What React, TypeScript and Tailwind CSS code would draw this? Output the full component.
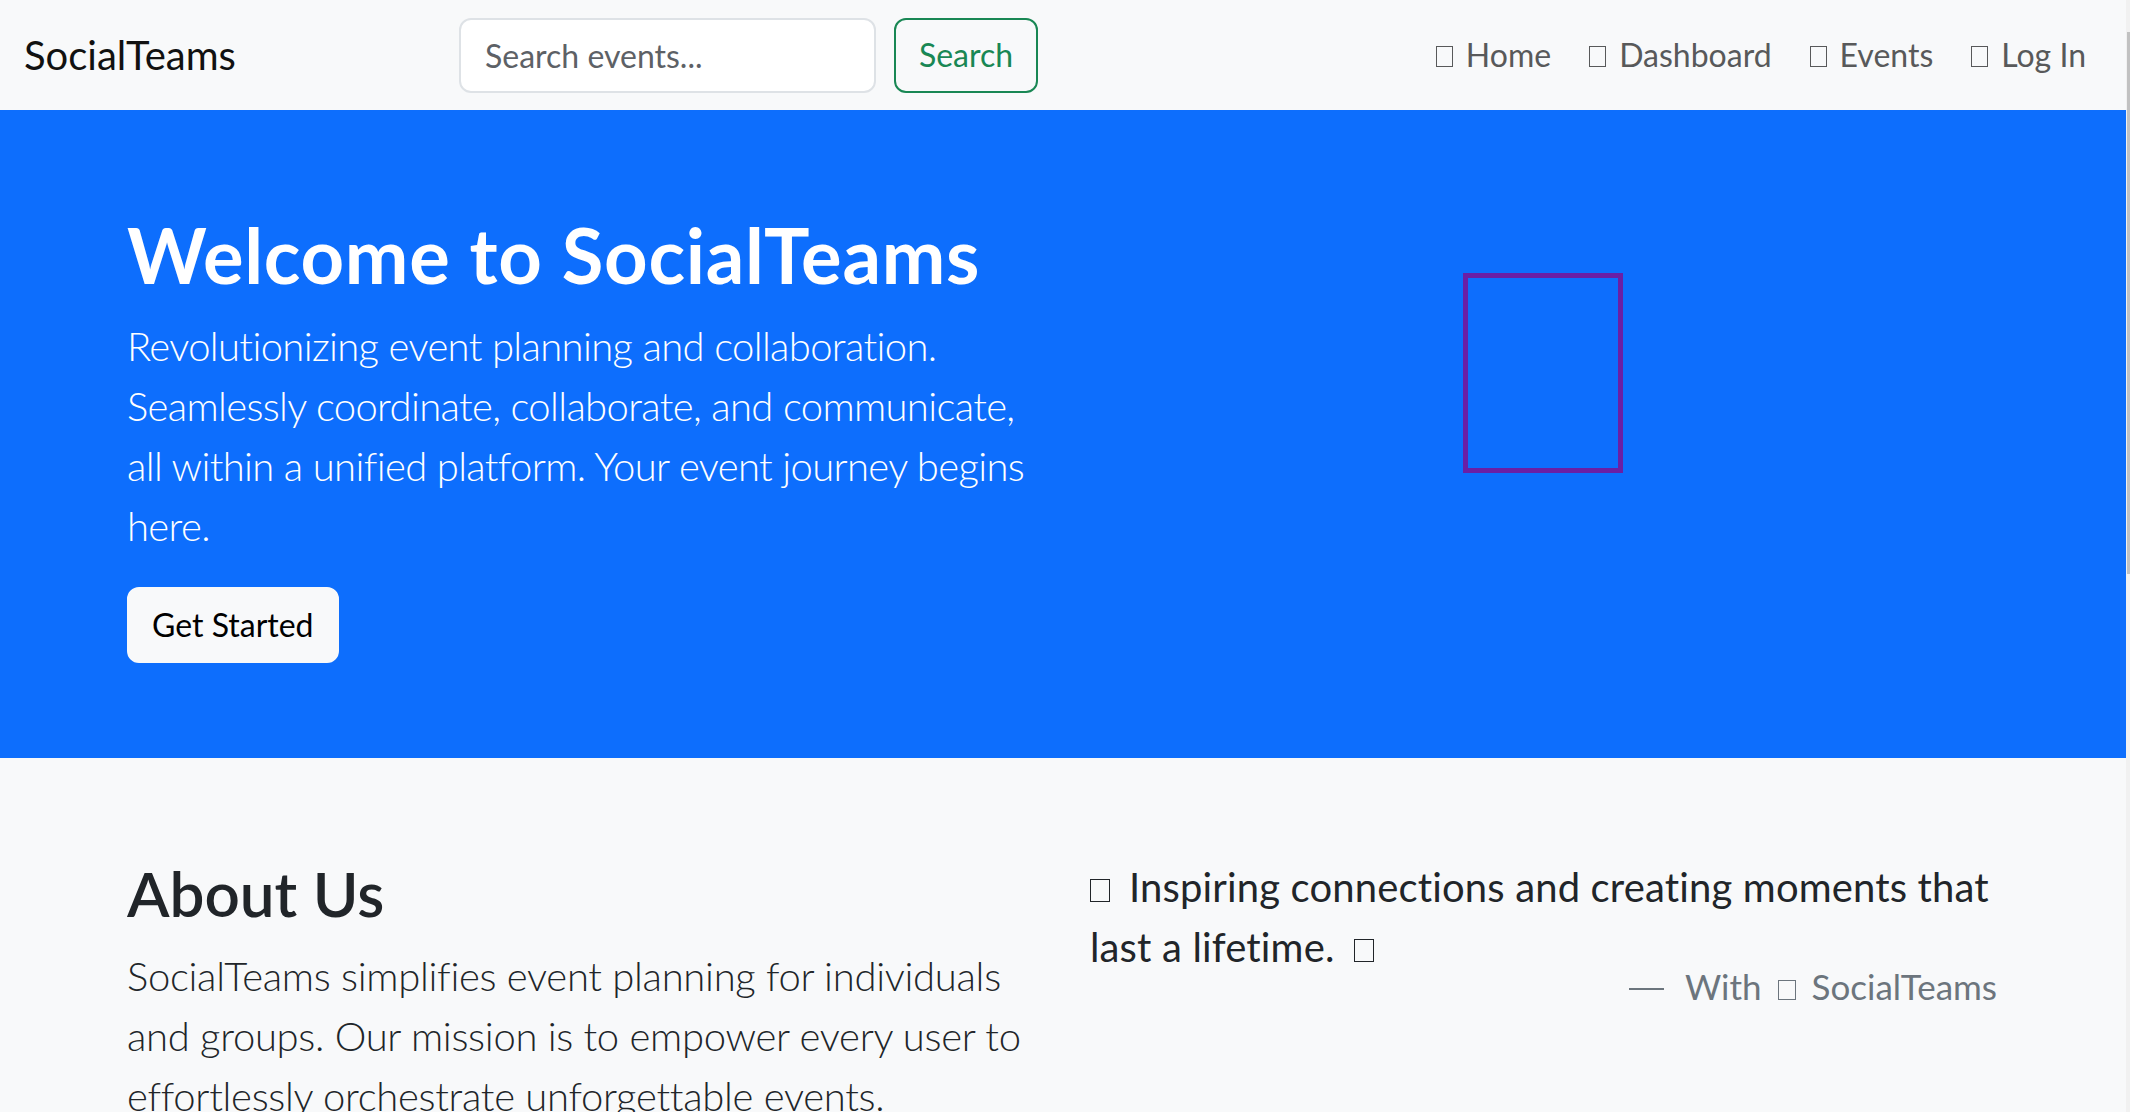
import React from 'react';

const navLinks = ['Home', 'Dashboard', 'Events', 'Log In'];

// missing icon-font glyph, drawn as the hollow box the browser shows
function Tofu({ className = '' }: { className?: string }) {
  return <span className={`inline-block border border-current align-baseline ${className}`} />;
}

function Navbar() {
  return (
    <nav className="h-[110px] bg-[#f8f9fa] flex items-center pl-[24px] pr-[24px]">
      <a href="#" className="w-[435px] text-[40px] text-[#111] leading-none">
        SocialTeams
      </a>
      <form className="flex items-center" onSubmit={(e) => e.preventDefault()}>
        <input
          type="search"
          placeholder="Search events..."
          className="w-[417px] h-[75px] bg-white border-2 border-[#dee2e6] rounded-[12px] px-[24px] text-[32px] text-[#212529] placeholder:text-[#5d6166] outline-none"
        />
        <button
          type="submit"
          className="ml-[18px] w-[144px] h-[75px] border-2 border-[#198754] rounded-[12px] text-[32px] text-[#198754] bg-transparent"
        >
          Search
        </button>
      </form>
      <ul className="ml-auto flex items-center gap-[6px]">
        {navLinks.map((label) => (
          <li key={label}>
            <a href="#" className="px-[16px] text-[32px] text-[#58595a] leading-[48px] whitespace-nowrap">
              <Tofu className="w-[17px] h-[21px] mr-[13px]" />
              {label}
            </a>
          </li>
        ))}
      </ul>
    </nav>
  );
}

function Hero() {
  return (
    <section className="h-[648px] bg-[#0d6efd] text-white">
      <div className="w-[1920px] mx-auto pt-[99px] grid grid-cols-2">
        <div className="px-[24px]">
          <h1 className="text-[76px] font-bold leading-[1.2] tracking-[0.7px] mb-[16px]">Welcome to SocialTeams</h1>
          <p className="text-[40px] font-light leading-[60px] tracking-[-0.65px] mb-[31px]">
            Revolutionizing event planning and collaboration. Seamlessly coordinate, collaborate, and
            communicate, all within a unified platform. Your event journey begins here.
          </p>
          <a
            href="#"
            className="inline-flex items-center h-[76px] px-[23px] bg-[#f8f9fa] border-2 border-[#f8f9fa] rounded-[12px] text-[32px] text-black"
          >
            Get Started
          </a>
        </div>
        <div className="px-[24px] flex justify-center items-start">
          <div className="mt-[64px] w-[160px] h-[200px] border-[5px] border-[#6a1fa5]" />
        </div>
      </div>
    </section>
  );
}

function About() {
  return (
    <section className="bg-[#f8f9fa]">
      <div className="w-[1920px] mx-auto pt-[98px] grid grid-cols-2">
        <div className="px-[24px]">
          <h2 className="text-[62px] font-semibold leading-[1.2] text-[#212529] mb-[16px]">About Us</h2>
          <p className="text-[40px] font-light leading-[60px] tracking-[-0.3px] text-[#212529]">
            SocialTeams simplifies event planning for individuals and groups. Our mission is to empower every
            user to effortlessly orchestrate unforgettable events.
          </p>
        </div>
        <figure className="px-[24px] pt-[1px]">
          <blockquote className="pl-[3px] text-[40px] leading-[60px] tracking-[0.15px] text-[#212529]">
            <Tofu className="w-[20px] h-[23px] mr-[19px]" />
            Inspiring connections and creating moments that last a lifetime.
            <Tofu className="w-[20px] h-[23px] ml-[19px]" />
          </blockquote>
          <figcaption className="-mt-[17px] pr-[2px] text-right text-[35px] leading-[1.5] text-[#6c757d]">
            <span className="inline-block align-baseline w-[35px] h-[2px] mb-[10px] mr-[21px] bg-current" />
            With
            <Tofu className="w-[18px] h-[20px] mx-[16px]" />
            SocialTeams
          </figcaption>
        </figure>
      </div>
    </section>
  );
}

export default function App() {
  return (
    <div className="h-[1112px] overflow-hidden flex bg-[#f8f9fa] font-['Lato',sans-serif]">
      <main className="flex-1 min-w-0">
        <Navbar />
        <Hero />
        <About />
      </main>
      <div className="w-[4px] bg-[#f1f1f1] flex flex-col items-end pt-[32px]">
        <div className="w-[3px] h-[542px] bg-[#c1c1c1]" />
      </div>
    </div>
  );
}
